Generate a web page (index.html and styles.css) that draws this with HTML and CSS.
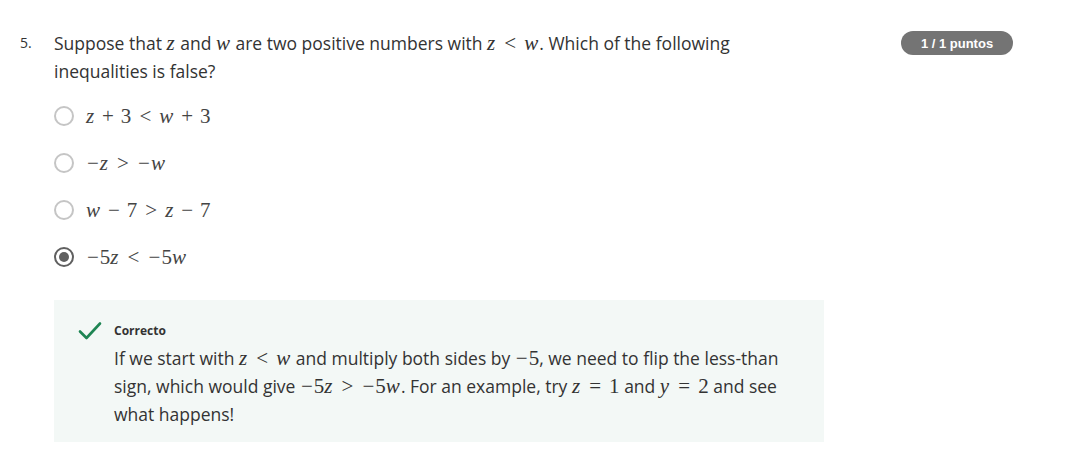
FILE: index.html
```html
<!DOCTYPE html>
<html>
<head>
<meta charset="utf-8">
<link rel="stylesheet" href="styles.css">
</head>
<body>
<div class="question">
  <div class="num">5.</div>
  <div class="body">
    <p class="prompt">Suppose that <span class="m"><i>z</i></span> and <span class="m"><i>w</i></span> are two positive numbers with <span class="m"><i>z</i><b class="rel">&lt;</b><i>w</i></span>. Which of the following inequalities is false?</p>
    <ul class="options">
      <li><span class="radio"></span><span class="m"><i>z</i><b class="bin">+</b>3<b class="rel">&lt;</b><i>w</i><b class="bin">+</b>3</span></li>
      <li><span class="radio"></span><span class="m"><b class="un">−</b><i>z</i><b class="rel">&gt;</b><b class="un">−</b><i>w</i></span></li>
      <li><span class="radio"></span><span class="m"><i>w</i><b class="bin">−</b>7<b class="rel">&gt;</b><i>z</i><b class="bin">−</b>7</span></li>
      <li><span class="radio checked"></span><span class="m"><b class="un">−</b>5<i>z</i><b class="rel">&lt;</b><b class="un">−</b>5<i>w</i></span></li>
    </ul>
    <div class="feedback">
      <svg class="check" width="24" height="20" viewBox="0 0 24 20"><path d="M2 10.5 L8.5 17 L22 2.5" fill="none" stroke="#1e8553" stroke-width="2.6" stroke-linecap="round" stroke-linejoin="round"/></svg>
      <div class="fb-text">
        <div class="fb-title">Correcto</div>
        <p>If we start with <span class="m"><i>z</i><b class="rel">&lt;</b><i>w</i></span> and multiply both sides by <span class="m"><b class="un">−</b>5</span>, we need to flip the less-than sign, which would give <span class="m"><b class="un">−</b>5<i>z</i><b class="rel">&gt;</b><b class="un">−</b>5<i>w</i></span>. For an example, try <span class="m"><i>z</i><b class="rel">=</b>1</span> and <span class="m"><i>y</i><b class="rel">=</b>2</span> and see what happens!</p>
      </div>
    </div>
  </div>
  <div class="badge">1 / 1 puntos</div>
</div>
</body>
</html>
```
FILE: styles.css
```css
* { box-sizing: border-box; }
body {
  margin: 0;
  background: #fff;
  font-family: "Open Sans", sans-serif;
  color: #333;
}
.question {
  display: flex;
  padding: 29px 0 0 20px;
}
.num {
  width: 34px;
  font-size: 14px;
  line-height: 28px;
  color: #333;
}
.body {
  width: 770px;
}
.prompt {
  margin: 0;
  width: 700px;
  font-size: 17.5px;
  line-height: 28px;
}
.m {
  font-family: "Liberation Serif", "DejaVu Serif", serif;
  font-size: 21px;
  line-height: 20px;
  white-space: nowrap;
}
.m i { font-style: italic; padding-right: 1px; }
.m b { font-weight: 400; display: inline-block; text-align: center; }
.m .rel { width: 0.778em; margin: 0 0.278em; }
.m .bin { width: 0.778em; margin: 0 0.222em; }
.m .un { width: 0.66em; }
.options {
  list-style: none;
  margin: 7px 0 0;
  padding: 0;
}
.options li {
  display: flex;
  align-items: center;
  height: 47px;
  gap: 12px;
  color: #333;
}
.options li .m { color: #444; }
.radio {
  width: 20px;
  height: 20px;
  border-radius: 50%;
  border: 2px solid #c5c5c5;
  display: inline-block;
  position: relative;
}
.radio.checked {
  border-color: #606060;
}
.radio.checked::after {
  content: "";
  position: absolute;
  left: 3px;
  top: 3px;
  width: 10px;
  height: 10px;
  border-radius: 50%;
  background: #606060;
}
.feedback {
  margin-top: 20px;
  background: #f3f8f6;
  height: 142px;
  display: flex;
  padding: 21px 24px 0 24px;
  gap: 12px;
}
.check { flex-shrink: 0; }
.fb-title {
  font-size: 12px;
  font-weight: 700;
  color: #333;
  line-height: 20px;
}
.fb-text p {
  margin: 3px 0 0;
  font-size: 17.5px;
  line-height: 28px;
  width: 690px;
}
.badge {
  margin-left: 77px;
  margin-top: 2px;
  height: 24px;
  width: 112px;
  border-radius: 12px;
  background: #747474;
  color: #fff;
  font-family: "Liberation Sans", Arial, sans-serif;
  font-weight: 700;
  font-size: 13px;
  display: flex;
  align-items: center;
  justify-content: center;
  flex-shrink: 0;
}
```
